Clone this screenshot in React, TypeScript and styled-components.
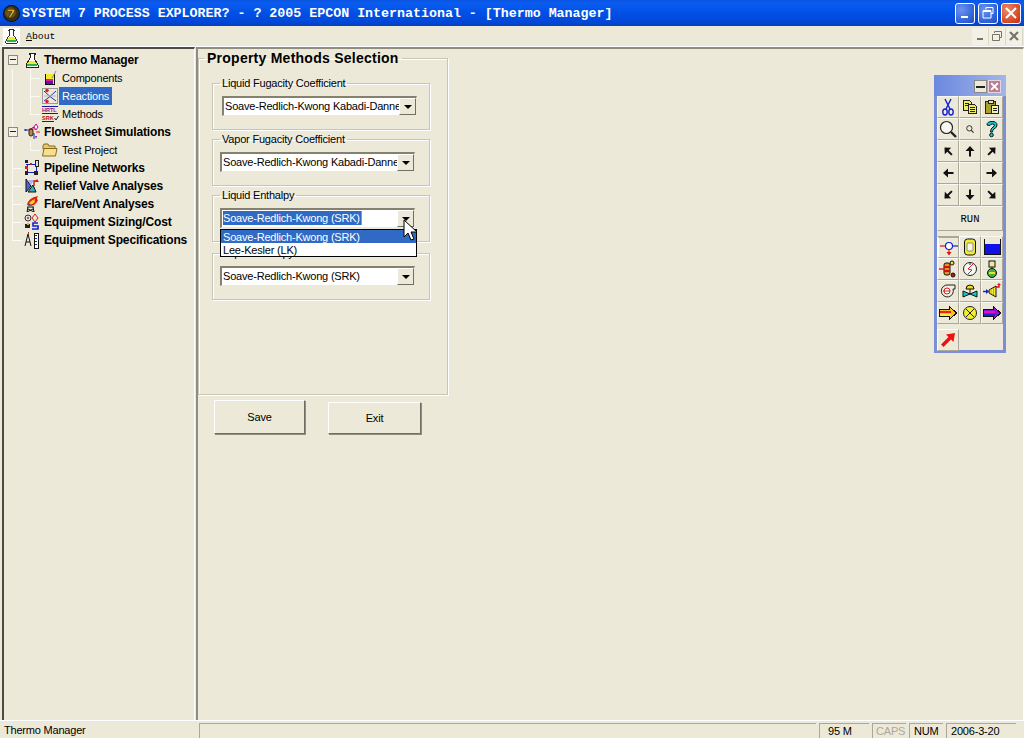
import type { ReactNode } from 'react';
import styled, { createGlobalStyle, css } from 'styled-components';

const GlobalStyle = createGlobalStyle`
  html, body {
    margin: 0;
    padding: 0;
    background: #ece9d8;
    overflow: hidden;
  }
  * {
    box-sizing: border-box;
  }
`;

const UI_FONT = `"Liberation Sans", Arial, sans-serif`;
const MONO_FONT = `"Liberation Mono", "Courier New", monospace`;

const Page = styled.div`
  position: relative;
  width: 1024px;
  height: 738px;
  overflow: hidden;
  display: flex;
  flex-direction: column;
  background: #ece9d8;
  color: #000;
  font-family: ${UI_FONT};
  font-size: 11px;
  letter-spacing: -0.2px;
`;

/* ---- title bar ---- */
const TitleBar = styled.div`
  height: 26px;
  flex: none;
  display: flex;
  align-items: center;
  padding: 0 3px 0 3px;
  background: linear-gradient(180deg, #0a55e0 0%, #0a5cf0 12%, #0050e6 50%, #0048d8 85%, #0a3fb8 100%);
  color: #fff;
`;

const TitleText = styled.span`
  margin-left: 2px;
  font-family: ${MONO_FONT};
  font-weight: bold;
  font-size: 13.3px;
  letter-spacing: 0;
  white-space: pre;
  flex: 1;
`;

const WindowButtons = styled.div`
  display: flex;
  gap: 3px;
`;

const WindowButton = styled.div<{ $close?: boolean }>`
  width: 20px;
  height: 21px;
  border: 1px solid #fff;
  border-radius: 3px;
  display: flex;
  align-items: center;
  justify-content: center;
  background: ${(p) =>
    p.$close
      ? 'radial-gradient(circle at 30% 30%, #e98a6c, #d8502c 60%, #b83214)'
      : 'radial-gradient(circle at 30% 30%, #6d93ee, #3568dc 60%, #1e48c0)'};
`;

/* ---- menu bar ---- */
const MenuBar = styled.div`
  height: 21px;
  flex: none;
  display: flex;
  align-items: center;
  padding-left: 3px;
  background: #ece9d8;
  border-bottom: 1px solid #fff;
`;

const MenuLogo = styled.div`
  width: 17px;
  height: 17px;
  background: #fff;
  display: flex;
  align-items: center;
  justify-content: center;
`;

const MenuItem = styled.span`
  margin-left: 6px;
  font-family: ${MONO_FONT};
  font-size: 9.8px;
  letter-spacing: 0;
  flex: 1;
`;

const MdiButtons = styled.div`
  display: flex;
  margin-right: 1px;
`;

const MdiButton = styled.div`
  width: 17px;
  height: 17px;
  display: flex;
  align-items: center;
  justify-content: center;
  background: #f3f1e6;
  border-right: 1px solid #dcd8c6;
`;

/* ---- workspace ---- */
const Workspace = styled.div`
  flex: 1;
  min-height: 0;
  display: flex;
  padding-left: 2px;
  border-bottom: 1px solid #fff;
`;

const TreePane = styled.div`
  width: 193px;
  flex: none;
  border-top: 2px solid #4c4a42;
  border-left: 2px solid #4c4a42;
  border-right: 1px solid #fff;
  padding-top: 2px;
`;

const Splitter = styled.div`
  width: 1px;
  flex: none;
`;

const MainPane = styled.div`
  flex: 1;
  min-width: 0;
  border-top: 2px solid #8f8d80;
  border-left: 2px solid #8f8d80;
  border-right: 1px solid #fff;
`;

/* ---- tree ---- */
const lineColor = '#fbfaf4';

const guides = {
  none: '',
  bar: css`
    background: linear-gradient(${lineColor}, ${lineColor}) 8px 0 / 1px 100% no-repeat;
  `,
  tee: css`
    background:
      linear-gradient(${lineColor}, ${lineColor}) 8px 0 / 1px 100% no-repeat,
      linear-gradient(${lineColor}, ${lineColor}) 8px 9px / 10px 1px no-repeat;
  `,
  ell: css`
    background:
      linear-gradient(${lineColor}, ${lineColor}) 8px 0 / 1px 10px no-repeat,
      linear-gradient(${lineColor}, ${lineColor}) 8px 9px / 10px 1px no-repeat;
  `,
};

type GuideKind = keyof typeof guides;

const Guide = styled.span<{ $kind: GuideKind }>`
  width: 18px;
  height: 18px;
  flex: none;
  display: flex;
  align-items: center;
  justify-content: center;
  ${(p) => guides[p.$kind]}
`;

const Expander = styled.span`
  width: 10px;
  height: 10px;
  margin-left: -1px;
  margin-top: -1px;
  border: 1px solid #8c8a7e;
  background:
    linear-gradient(#222 0 0) 1px 3.5px / 6px 1px no-repeat,
    #f4f2e8;
`;

const TreeRow = styled.div`
  height: 18px;
  display: flex;
  align-items: center;
`;

const TreeIcon = styled.span`
  width: 16px;
  height: 16px;
  flex: none;
  margin: 0 2px 0 2px;
  display: block;
  svg {
    display: block;
  }
`;

const TreeLabel = styled.span<{ $bold?: boolean; $selected?: boolean }>`
  height: 18px;
  line-height: 18px;
  padding: 0 3px;
  margin-left: -1px;
  white-space: nowrap;
  font-size: ${(p) => (p.$bold ? '12px' : '11px')};
  font-weight: ${(p) => (p.$bold ? 'bold' : 'normal')};
  letter-spacing: ${(p) => (p.$bold ? '-0.15px' : '-0.2px')};
  color: ${(p) => (p.$selected ? '#fff' : '#000')};
  background: ${(p) => (p.$selected ? '#316ac5' : 'transparent')};
`;

/* ---- form ---- */
const Group = styled.fieldset<{ $top?: number }>`
  margin: ${(p) => p.$top ?? 0}px 0 0 0;
  padding: 6px 0 0 8px;
  width: 218px;
  height: 54px;
  min-width: 0;
  border: 1px solid #c7c5b6;
  box-shadow: 1px 1px 0 #fff, inset 1px 1px 0 #fff;
`;

const GroupLegend = styled.legend`
  margin-left: -1px;
  padding: 0 2px;
  height: 14px;
  line-height: 14px;
`;

const MethodsPanel = styled.fieldset`
  margin: 0;
  padding: 9px 0 0 13px;
  width: 250px;
  height: 346px;
  min-width: 0;
  border: 1px solid #c7c5b6;
  box-shadow: 1px 1px 0 #fff, inset 1px 1px 0 #fff;
`;

const MethodsLegend = styled.legend`
  margin-left: -8px;
  padding: 0 3px;
  height: 18px;
  line-height: 18px;
  font-size: 14px;
  font-weight: bold;
  letter-spacing: 0.25px;
`;

const Combo = styled.div<{ $shift?: number }>`
  width: 195px;
  height: 20px;
  margin-left: ${(p) => p.$shift ?? 0}px;
  display: flex;
  align-items: center;
  background: #fff;
  border-style: solid;
  border-width: 2px 1px 1px 2px;
  border-color: #84826f #ece9d8 #ece9d8 #84826f;
`;

const ComboText = styled.span<{ $selected?: boolean }>`
  flex: 1;
  min-width: 0;
  margin-bottom: 2px;
  overflow: hidden;
  white-space: nowrap;
  line-height: 14px;
  padding-left: 1px;
  > span {
    display: inline-block;
    padding: 0 1px 0 0;
    ${(p) =>
      p.$selected &&
      css`
        color: #fff;
        background: #316ac5;
        border-right: 1px solid #e08a20;
      `}
  }
`;

const ComboButton = styled.span`
  width: 17px;
  height: 17px;
  flex: none;
  display: flex;
  align-items: center;
  justify-content: center;
  background: #ece9d8;
  border: 1px solid;
  border-color: #fff #716f64 #716f64 #fff;
  &::after {
    content: '';
    border: 4px solid transparent;
    border-top: 4px solid #000;
    border-bottom: 0;
  }
`;

const ComboList = styled.div`
  position: absolute;
  left: 220px;
  top: 229px;
  width: 197px;
  height: 28px;
  background: #fff;
  border: 1px solid #000;
`;

const ComboOption = styled.div<{ $active?: boolean }>`
  height: 13px;
  line-height: 15px;
  padding-left: 2px;
  color: ${(p) => (p.$active ? '#fff' : '#000')};
  background: ${(p) => (p.$active ? '#316ac5' : '#fff')};
`;

const Cursor = styled.svg`
  position: absolute;
  left: 403px;
  top: 219px;
`;

const ActionRow = styled.div`
  display: flex;
  align-items: flex-end;
  padding-left: 16px;
  margin-top: 5px;
`;

const ActionButton = styled.div<{ $w: number; $h: number; $gap?: number }>`
  width: ${(p) => p.$w}px;
  height: ${(p) => p.$h}px;
  margin-left: ${(p) => p.$gap ?? 0}px;
  display: flex;
  align-items: center;
  justify-content: center;
  background: #ece9d8;
  border: 1px solid;
  border-color: #fff #716f64 #716f64 #fff;
  box-shadow: 1px 1px 0 #8f8d80;
`;

/* ---- status bar ---- */
const StatusBar = styled.div`
  height: 17px;
  flex: none;
  display: flex;
  padding: 2px 8px 0 0;
  gap: 3px;
`;

const StatusMessage = styled.span`
  width: 196px;
  flex: none;
  padding-left: 4px;
  line-height: 14px;
`;

const StatusCell = styled.span<{ $w?: number; $pad?: number; $muted?: boolean }>`
  ${(p) => (p.$w ? `width: ${p.$w}px; flex: none;` : 'flex: 1;')}
  height: 15px;
  line-height: 14px;
  border-top: 1px solid #aca899;
  border-left: 1px solid #aca899;
  padding-left: ${(p) => p.$pad ?? 0}px;
  color: ${(p) => (p.$muted ? '#aca899' : '#000')};
`;

/* ---- floating toolbox ---- */
const Toolbox = styled.div`
  position: absolute;
  left: 934px;
  top: 75px;
  width: 72px;
  height: 278px;
  background: #ece9d8;
  border: 3px solid #7a8fd8;
  border-top: 0;
  display: flex;
  flex-direction: column;
`;

const ToolboxTitle = styled.div`
  height: 21px;
  flex: none;
  margin: 0 -3px;
  padding: 5px 5px 0 0;
  display: flex;
  justify-content: flex-end;
  gap: 1px;
  background: linear-gradient(90deg, #6b88de, #a3b6ea);
`;

const ToolboxTitleButton = styled.span<{ $close?: boolean }>`
  width: 13px;
  height: 13px;
  display: flex;
  align-items: center;
  justify-content: center;
  background: ${(p) => (p.$close ? '#b87f95' : '#ece9d8')};
  border: 1px solid ${(p) => (p.$close ? '#e6d6dc' : '#888')};
`;

const ToolGrid = styled.div<{ $mt?: number }>`
  display: grid;
  grid-template-columns: repeat(3, 22px);
  grid-auto-rows: 22px;
  margin-top: ${(p) => p.$mt ?? 0}px;
`;

const RunGrid = styled(ToolGrid)`
  grid-auto-rows: 25px;
`;

const Tool = styled.div<{ $raised?: boolean; $pressed?: boolean; $wide?: boolean }>`
  display: flex;
  align-items: center;
  justify-content: center;
  background: #ece9d8;
  border-right: 1px solid #aca899;
  border-bottom: 1px solid #aca899;
  border-left: 1px solid ${(p) => (p.$raised ? '#fff' : '#f8f7f0')};
  border-top: 1px solid ${(p) => (p.$raised ? '#fff' : '#f8f7f0')};
  ${(p) =>
    p.$pressed &&
    css`
      border-top: 2px solid #aca899;
      border-left: 2px solid #fff;
    `}
  ${(p) =>
    p.$wide &&
    css`
      grid-column: span 3;
      font-family: ${MONO_FONT};
      font-size: 10.5px;
      letter-spacing: 0;
    `}
`;

/* ---- icons ---- */
const Flask = ({ size = 16 }: { size?: number }) => (
  <svg width={size} height={size} viewBox="0 0 16 16" shapeRendering="crispEdges">
    <path d="M5 1h6v1h-1v4l4 7v2H2v-2l4-7V2H5z" fill="#fff" stroke="#222" strokeWidth="1" />
    <path d="M5 9h6l2 3H3z" fill="#f2e92a" />
    <path d="M3 12h10v2H3z" fill="#22b83a" />
  </svg>
);

const Beaker = () => (
  <svg width="16" height="16" viewBox="0 0 16 16" shapeRendering="crispEdges">
    <path d="M3 4v10h9V4" fill="#f2e92a" stroke="#111" />
    <path d="M4 9h7v2H4z" fill="#d81ca8" />
    <path d="M4 11h7v3H4z" fill="#6a10a8" />
    <path d="M10 8l4-7" stroke="#888" fill="none" shapeRendering="auto" />
  </svg>
);

const ReactionIcon = () => (
  <svg width="16" height="16" viewBox="0 0 16 16">
    <rect x="0.5" y="0.5" width="15" height="15" fill="#ece9d8" stroke="#9a9a9a" />
    <path d="M2 3q6 6 12 10M14 3Q8 9 2 13" fill="none" stroke="#2030c0" />
    <path d="M2 8h12" stroke="#b8b8b8" />
    <circle cx="5" cy="2.5" r="1.8" fill="#e02020" />
    <circle cx="5" cy="13.5" r="1.8" fill="#e02020" />
  </svg>
);

const MethodsIcon = () => (
  <svg width="17" height="16" viewBox="0 0 17 16">
    <path d="M0 0h16v1H0zM0 7h16v1H0zM0 15h12v1H0z" fill="#1a1a9a" />
    <text x="0" y="6" fontFamily={UI_FONT} fontWeight="bold" fontSize="5.5" letterSpacing="0" fill="#8a1a8a">HRTL</text>
    <text x="0" y="14" fontFamily={UI_FONT} fontWeight="bold" fontSize="5.5" letterSpacing="0" fill="#b01010">SRK</text>
    <path d="M12.5 12l1.5 2 2.5-4" fill="none" stroke="#222" />
  </svg>
);

const FlowsheetIcon = () => (
  <svg width="18" height="18" viewBox="0 0 18 18">
    <path d="M0 6h5M5 6l5-3M10 9v6" stroke="#1020c0" fill="none" />
    <path d="M5 5h6M12 8h4" stroke="#e02020" fill="none" />
    <rect x="5" y="5" width="4" height="7" rx="2" fill="#b88a3a" stroke="#222" />
    <path d="M12 0l2 3-2 3-2-3z" fill="#fff" stroke="#c000a0" />
    <path d="M11 12h2l-1 3z" fill="#9010c0" />
    <path d="M1 5l2 1-2 1z" fill="#1020c0" />
  </svg>
);

const FolderIcon = () => (
  <svg width="16" height="16" viewBox="0 0 16 16">
    <path d="M1 4l1-2h4l1 2h6v3H1z" fill="#e8c86a" stroke="#8a6a20" />
    <path d="M.5 14L2 6.5h13L13.5 14z" fill="#f8e08a" stroke="#8a6a20" />
  </svg>
);

const PipelineIcon = () => (
  <svg width="16" height="16" viewBox="0 0 16 16" shapeRendering="crispEdges">
    <path d="M2 4h10M3 4v9M12 4v9M3 12h9" stroke="#1020c0" fill="none" />
    <path d="M1 0h3v3H1zM1 11h3v4H1zM10 11h4v4h-4z" fill="#222" />
    <rect x="11" y="0" width="3" height="6" fill="#ddd" stroke="#222" />
    <rect x="1" y="6" width="3" height="3" fill="#d02020" />
    <rect x="6" y="3" width="2" height="2" fill="#d02020" />
  </svg>
);

const ReliefIcon = () => (
  <svg width="16" height="16" viewBox="0 0 16 16">
    <path d="M2 1l5 7-5 6z" fill="#5060e0" stroke="#111" />
    <path d="M3 2l4 5 3-5z" fill="#b0b0f0" />
    <path d="M4 14L9 7l3 7z" fill="#30b0c0" stroke="#111" />
    <path d="M10 8V3h3" stroke="#e01010" fill="none" strokeWidth="1.4" />
    <path d="M11 4l2-3 2 3z" fill="#e01010" />
  </svg>
);

const FlareIcon = () => (
  <svg width="16" height="16" viewBox="0 0 16 16">
    <path d="M3 9Q4 2 14 0q-2 3 0 4-2 5-7 6z" fill="#e02010" />
    <path d="M5 8q1-3 6-5-1 2 0 3-2 2-5 3z" fill="#f8d020" />
    <path d="M4 9q2-2 3-1-1 1-2 2z" fill="#2030d0" />
    <path d="M3 11h7M4 11l-1 5M9 11l1 5M4 13l6 3M9 13l-6 3" stroke="#111" fill="none" />
  </svg>
);

const SizingIcon = () => (
  <svg width="16" height="16" viewBox="0 0 16 16">
    <circle cx="4" cy="4" r="3" fill="#ddd" stroke="#333" />
    <circle cx="4" cy="4" r="1" fill="#d02020" />
    <path d="M11 0l3 4-3 4-3-4z" fill="#f0e8d0" stroke="#d02020" />
    <path d="M1 10h5v4H1z" fill="#222" />
    <path d="M3 9h2v2H3z" fill="#d8c020" />
    <path d="M14 9h-5v3h5v3H8" fill="none" stroke="#1020d0" strokeWidth="1.6" />
  </svg>
);

const SpecIcon = () => (
  <svg width="16" height="17" viewBox="0 0 16 17" shapeRendering="crispEdges">
    <path d="M4 2L1 14M4 2l3 12M2 10h4" stroke="#111" fill="none" shapeRendering="auto" />
    <rect x="10" y="1" width="4" height="15" fill="#fff" stroke="#111" />
    <path d="M11 3h2M11 6h2M11 9h2M11 12h2" stroke="#1020c0" />
    <path d="M4 0v2" stroke="#d02020" />
  </svg>
);

const Arrow = ({ angle }: { angle: number }) => (
  <svg width="16" height="16" viewBox="0 0 16 16">
    <path d="M8 3l4.5 5H9v5.5H7V8H3.5z" fill="#111" transform={`rotate(${angle} 8 8)`} />
  </svg>
);

const Scissors = () => (
  <svg width="16" height="18" viewBox="0 0 16 18">
    <path d="M5 1l5 10M11 1L6 11" stroke="#1020d0" strokeWidth="1.4" fill="none" />
    <ellipse cx="5" cy="14" rx="2.2" ry="3" fill="none" stroke="#1020d0" strokeWidth="1.4" />
    <ellipse cx="11" cy="14" rx="2.2" ry="3" fill="none" stroke="#1020d0" strokeWidth="1.4" />
  </svg>
);

const Copy = () => (
  <svg width="16" height="16" viewBox="0 0 16 16" shapeRendering="crispEdges">
    <path d="M1.5 1.5h6l2 2v8h-8z" fill="#f0ec60" stroke="#222" />
    <path d="M6.5 5.5h6l2 2v7h-8z" fill="#f0ec60" stroke="#222" />
    <path d="M3 4h4M3 6h3M8 8h5M8 10h5M8 12h5" stroke="#222" />
  </svg>
);

const Paste = () => (
  <svg width="16" height="16" viewBox="0 0 16 16" shapeRendering="crispEdges">
    <path d="M1.5 2.5h10v12h-10z" fill="#a8a030" stroke="#222" />
    <path d="M4 1h5v3H4z" fill="#ddd" stroke="#222" />
    <path d="M7.5 6.5h7v8h-7z" fill="#f6f4a0" stroke="#222" />
    <path d="M9 9h4M9 11h4" stroke="#222" />
  </svg>
);

const Magnifier = ({ size, plain }: { size: number; plain?: boolean }) => (
  <svg width={size} height={size} viewBox="0 0 18 18">
    <circle cx="7.5" cy="7.5" r="6" fill={plain ? 'none' : '#f8f8f2'} stroke="#222" strokeWidth={plain ? 2 : 1.2} />
    <path d="M12 12l5 5" stroke="#222" strokeWidth="2.4" />
  </svg>
);

const Question = () => (
  <svg width="14" height="18" viewBox="0 0 14 18">
    <path d="M2 5q0-3.5 5-3.5T12 5q0 2.5-3 4-1.5 1-1.5 3h-2q0-3.5 2.5-5 1.5-1 1.5-2t-2-1-2.5 1.5z" fill="#10d0d8" stroke="#111" />
    <circle cx="6.5" cy="15" r="1.8" fill="#10d0d8" stroke="#111" />
  </svg>
);

const FlashIcon = () => (
  <svg width="18" height="16" viewBox="0 0 18 16">
    <path d="M0 6h5" stroke="#e01010" strokeWidth="1.2" />
    <path d="M12 6h6" stroke="#1020d0" strokeWidth="1.2" />
    <circle cx="9" cy="6" r="3.5" fill="#fff" stroke="#1020d0" strokeWidth="1.2" />
    <path d="M9 10v3" stroke="#e01010" strokeWidth="1.2" />
    <path d="M6.5 12h5L9 15.5z" fill="#e01010" />
  </svg>
);

const DrumIcon = () => (
  <svg width="14" height="18" viewBox="0 0 14 18">
    <rect x="1.5" y="1" width="11" height="16" rx="3" fill="#f2ec30" stroke="#111" />
    <rect x="4" y="5" width="6" height="8" rx="1" fill="#f8f6e8" stroke="#888" />
  </svg>
);

const TankIcon = () => (
  <svg width="17" height="16" viewBox="0 0 17 16" shapeRendering="crispEdges">
    <path d="M1 5h15v10H1z" fill="#1010e8" />
    <path d="M.5 0v15.5h16V0" fill="none" stroke="#111" />
  </svg>
);

const ColumnIcon = () => (
  <svg width="18" height="18" viewBox="0 0 18 18">
    <rect x="5" y="3" width="6" height="12" rx="2" fill="#e89020" stroke="#111" />
    <path d="M5 7h6M5 11h6" stroke="#d01010" strokeWidth="2" />
    <circle cx="13" cy="3" r="2" fill="#f0e030" stroke="#111" />
    <circle cx="14" cy="15" r="2" fill="#d01010" stroke="#111" />
    <path d="M0 9h5" stroke="#e01010" strokeWidth="1.4" />
  </svg>
);

const GaugeIcon = () => (
  <svg width="16" height="16" viewBox="0 0 16 16">
    <circle cx="8" cy="8" r="6.5" fill="#f8f8f2" stroke="#222" />
    <path d="M11 3L6 8l4 1-4 4" fill="none" stroke="#d02020" />
    <path d="M8 2v2" stroke="#1020c0" />
  </svg>
);

const ReactorIcon = () => (
  <svg width="16" height="18" viewBox="0 0 16 18">
    <rect x="5" y="1" width="6" height="6" fill="#f0e8a0" stroke="#111" />
    <path d="M8 7v3" stroke="#111" />
    <circle cx="8" cy="13" r="4.5" fill="#40b040" stroke="#111" />
    <path d="M5 12h6v2H5z" fill="#f0e020" />
  </svg>
);

const PumpIcon = () => (
  <svg width="16" height="14" viewBox="0 0 16 14">
    <path d="M8 1h7v4h-2A6 6 0 1 1 8 1z" fill="#f0ece0" stroke="#222" />
    <circle cx="7" cy="7" r="3" fill="#fff" stroke="#d02020" />
    <path d="M3 7h7" stroke="#d02020" />
  </svg>
);

const ValveIcon = () => (
  <svg width="16" height="16" viewBox="0 0 16 16">
    <path d="M4 6a4 4 0 0 1 8 0z" fill="#f0e020" stroke="#111" />
    <path d="M1 8l7 3 7-3v6l-7-3-7 3z" fill="#10c8d0" stroke="#111" />
    <path d="M8 6v5" stroke="#111" />
  </svg>
);

const TurbineIcon = () => (
  <svg width="18" height="16" viewBox="0 0 18 16">
    <path d="M6 7l7-4v11L6 10z" fill="#f4ee30" stroke="#111" />
    <path d="M8 6v5M10.5 5v7" stroke="#c8a000" />
    <path d="M0 8.5h4" stroke="#1020d0" strokeWidth="1.4" />
    <path d="M3 6l3 2.5-3 2.5z" fill="#1020d0" />
    <path d="M13 4h3V2" stroke="#e01010" fill="none" strokeWidth="1.4" />
    <path d="M14 2l2-2 2 2z" fill="#e01010" />
  </svg>
);

const BigArrow = ({ violet }: { violet?: boolean }) => (
  <svg width="18" height="14" viewBox="0 0 18 14" shapeRendering="crispEdges">
    <path d="M.5 3.5h10V.5l7 6.5-7 6.5v-3H.5z" fill={violet ? '#9010d0' : '#f8c020'} stroke="#111" />
    <path d="M1 5h11v2H1z" fill={violet ? '#e010c0' : '#f02020'} />
    <path d="M1 8h11v2H1z" fill={violet ? '#2020d0' : '#f8f040'} />
  </svg>
);

const MixerIcon = () => (
  <svg width="16" height="16" viewBox="0 0 16 16">
    <circle cx="8" cy="8" r="6.5" fill="#f4ee30" stroke="#222" />
    <path d="M4 4l8 8M12 4l-8 8" stroke="#222" />
  </svg>
);

const RedArrow = () => (
  <svg width="16" height="16" viewBox="0 0 16 16">
    <path d="M15 1l-1.5 9-2.5-2.5-7.5 7.5-2.5-2.5 7.500-7.500L6 2.5z" fill="#f01010" />
  </svg>
);

const tree: { label: string; kind: GuideKind; icon: ReactNode }[] = [
  { label: 'Pipeline Networks', kind: 'tee', icon: <PipelineIcon /> },
  { label: 'Relief Valve Analyses', kind: 'tee', icon: <ReliefIcon /> },
  { label: 'Flare/Vent Analyses', kind: 'tee', icon: <FlareIcon /> },
  { label: 'Equipment Sizing/Cost', kind: 'tee', icon: <SizingIcon /> },
  { label: 'Equipment Specifications', kind: 'ell', icon: <SpecIcon /> },
];

const arrowAngles = [-45, 0, 45, -90, null, 90, -135, 180, 135];

export default function App() {
  return (
    <Page>
      <GlobalStyle />
      <TitleBar>
        <svg width="17" height="17" viewBox="0 0 16 16">
          <circle cx="8" cy="8" r="7.5" fill="#3a3018" stroke="#111" />
          <circle cx="7" cy="7" r="5" fill="#6a5420" />
          <path d="M4 4h7v2L7 12H5l3.5-6H4z" fill="#d8b020" stroke="#111" strokeWidth="0.5" />
        </svg>
        <TitleText>SYSTEM 7 PROCESS EXPLORER? - ? 2005 EPCON International - [Thermo Manager]</TitleText>
        <WindowButtons>
          <WindowButton>
            <svg width="12" height="14" viewBox="0 0 12 14">
              <path d="M2 10h7v2H2z" fill="#fff" />
            </svg>
          </WindowButton>
          <WindowButton>
            <svg width="14" height="14" viewBox="0 0 14 14" fill="none" stroke="#fff">
              <path d="M5 3.5V1.5h7v6h-2" strokeWidth="1" />
              <path d="M2 5h8v7H2z" strokeWidth="1" />
              <path d="M2 5h8" strokeWidth="2" />
            </svg>
          </WindowButton>
          <WindowButton $close>
            <svg width="14" height="14" viewBox="0 0 14 14">
              <path d="M2 2l10 10M12 2L2 12" stroke="#fff" strokeWidth="2" />
            </svg>
          </WindowButton>
        </WindowButtons>
      </TitleBar>

      <MenuBar>
        <MenuLogo>
          <Flask size={15} />
        </MenuLogo>
        <MenuItem>
          <u>A</u>bout
        </MenuItem>
        <MdiButtons>
          <MdiButton>
            <svg width="10" height="10" viewBox="0 0 10 10">
              <path d="M2 7h6v2H2z" fill="#77756a" />
            </svg>
          </MdiButton>
          <MdiButton>
            <svg width="12" height="12" viewBox="0 0 12 12" fill="none" stroke="#77756a">
              <path d="M3.5 3V1.5h7v6H9" />
              <path d="M1.5 4.5h7v6h-7z" />
            </svg>
          </MdiButton>
          <MdiButton>
            <svg width="10" height="10" viewBox="0 0 10 10">
              <path d="M1 1l8 8M9 1L1 9" stroke="#77756a" strokeWidth="2.2" />
            </svg>
          </MdiButton>
        </MdiButtons>
      </MenuBar>

      <Workspace>
        <TreePane>
          <TreeRow>
            <Guide $kind="none">
              <Expander />
            </Guide>
            <TreeIcon>
              <Flask />
            </TreeIcon>
            <TreeLabel $bold>Thermo Manager</TreeLabel>
          </TreeRow>
          <TreeRow>
            <Guide $kind="bar" />
            <Guide $kind="tee" />
            <TreeIcon>
              <Beaker />
            </TreeIcon>
            <TreeLabel>Components</TreeLabel>
          </TreeRow>
          <TreeRow>
            <Guide $kind="bar" />
            <Guide $kind="tee" />
            <TreeIcon>
              <ReactionIcon />
            </TreeIcon>
            <TreeLabel $selected>Reactions</TreeLabel>
          </TreeRow>
          <TreeRow>
            <Guide $kind="bar" />
            <Guide $kind="ell" />
            <TreeIcon>
              <MethodsIcon />
            </TreeIcon>
            <TreeLabel>Methods</TreeLabel>
          </TreeRow>
          <TreeRow>
            <Guide $kind="bar">
              <Expander />
            </Guide>
            <TreeIcon>
              <FlowsheetIcon />
            </TreeIcon>
            <TreeLabel $bold>Flowsheet Simulations</TreeLabel>
          </TreeRow>
          <TreeRow>
            <Guide $kind="bar" />
            <Guide $kind="ell" />
            <TreeIcon>
              <FolderIcon />
            </TreeIcon>
            <TreeLabel>Test Project</TreeLabel>
          </TreeRow>
          {tree.map((item) => (
            <TreeRow key={item.label}>
              <Guide $kind={item.kind} />
              <TreeIcon>{item.icon}</TreeIcon>
              <TreeLabel $bold>{item.label}</TreeLabel>
            </TreeRow>
          ))}
        </TreePane>
        <Splitter />
        <MainPane>
          <MethodsPanel>
            <MethodsLegend>Property Methods Selection</MethodsLegend>
            <Group>
              <GroupLegend>Liquid Fugacity Coefficient</GroupLegend>
              <Combo $shift={1}>
                <ComboText>
                  <span>Soave-Redlich-Kwong Kabadi-Danner</span>
                </ComboText>
                <ComboButton />
              </Combo>
            </Group>
            <Group $top={2}>
              <GroupLegend>Vapor Fugacity Coefficient</GroupLegend>
              <Combo $shift={-1}>
                <ComboText>
                  <span>Soave-Redlich-Kwong Kabadi-Danner</span>
                </ComboText>
                <ComboButton />
              </Combo>
            </Group>
            <Group $top={2}>
              <GroupLegend>Liquid Enthalpy</GroupLegend>
              <Combo $shift={-1}>
                <ComboText $selected>
                  <span>Soave-Redlich-Kwong (SRK)</span>
                </ComboText>
                <ComboButton />
              </Combo>
            </Group>
            <Group $top={4}>
              <GroupLegend>Vapor Enthalpy</GroupLegend>
              <Combo $shift={-1}>
                <ComboText>
                  <span>Soave-Redlich-Kwong (SRK)</span>
                </ComboText>
                <ComboButton />
              </Combo>
            </Group>
          </MethodsPanel>
          <ActionRow>
            <ActionButton $w={91} $h={34}>Save</ActionButton>
            <ActionButton $w={93} $h={32} $gap={23}>Exit</ActionButton>
          </ActionRow>
        </MainPane>
      </Workspace>

      <StatusBar>
        <StatusMessage>Thermo Manager</StatusMessage>
        <StatusCell />
        <StatusCell $w={50} $pad={8}>95 M</StatusCell>
        <StatusCell $w={34} $pad={3} $muted>CAPS</StatusCell>
        <StatusCell $w={34} $pad={4}>NUM</StatusCell>
        <StatusCell $w={70} $pad={4}>2006-3-20</StatusCell>
      </StatusBar>

      <ComboList>
        <ComboOption $active>Soave-Redlich-Kwong (SRK)</ComboOption>
        <ComboOption>Lee-Kesler (LK)</ComboOption>
      </ComboList>

      <Cursor width="15" height="22" viewBox="0 0 15 22">
        <path d="M1 1v17l4-4 3 7 3-1-3-7h6z" fill="#fff" stroke="#000" />
      </Cursor>

      <Toolbox>
        <ToolboxTitle>
          <ToolboxTitleButton>
            <svg width="9" height="8" viewBox="0 0 9 8">
              <path d="M0 3h9v2H0z" fill="#222" />
            </svg>
          </ToolboxTitleButton>
          <ToolboxTitleButton $close>
            <svg width="9" height="9" viewBox="0 0 8 8">
              <path d="M1 1l6 6M7 1L1 7" stroke="#fff" strokeWidth="1.8" />
            </svg>
          </ToolboxTitleButton>
        </ToolboxTitle>
        <ToolGrid>
          <Tool><Scissors /></Tool>
          <Tool><Copy /></Tool>
          <Tool><Paste /></Tool>
          <Tool><Magnifier size={18} /></Tool>
          <Tool><Magnifier size={8} plain /></Tool>
          <Tool><Question /></Tool>
        </ToolGrid>
        <ToolGrid>
          {arrowAngles.map((angle, i) => (
            <Tool key={i}>{angle !== null && <Arrow angle={angle} />}</Tool>
          ))}
        </ToolGrid>
        <RunGrid>
          <Tool $wide>RUN</Tool>
        </RunGrid>
        <ToolGrid $mt={5}>
          <Tool $pressed><FlashIcon /></Tool>
          <Tool $raised><DrumIcon /></Tool>
          <Tool><TankIcon /></Tool>
          <Tool $raised><ColumnIcon /></Tool>
          <Tool><GaugeIcon /></Tool>
          <Tool><ReactorIcon /></Tool>
          <Tool><PumpIcon /></Tool>
          <Tool><ValveIcon /></Tool>
          <Tool><TurbineIcon /></Tool>
          <Tool><BigArrow /></Tool>
          <Tool><MixerIcon /></Tool>
          <Tool><BigArrow violet /></Tool>
        </ToolGrid>
        <ToolGrid $mt={5}>
          <Tool $raised><RedArrow /></Tool>
        </ToolGrid>
      </Toolbox>
    </Page>
  );
}
